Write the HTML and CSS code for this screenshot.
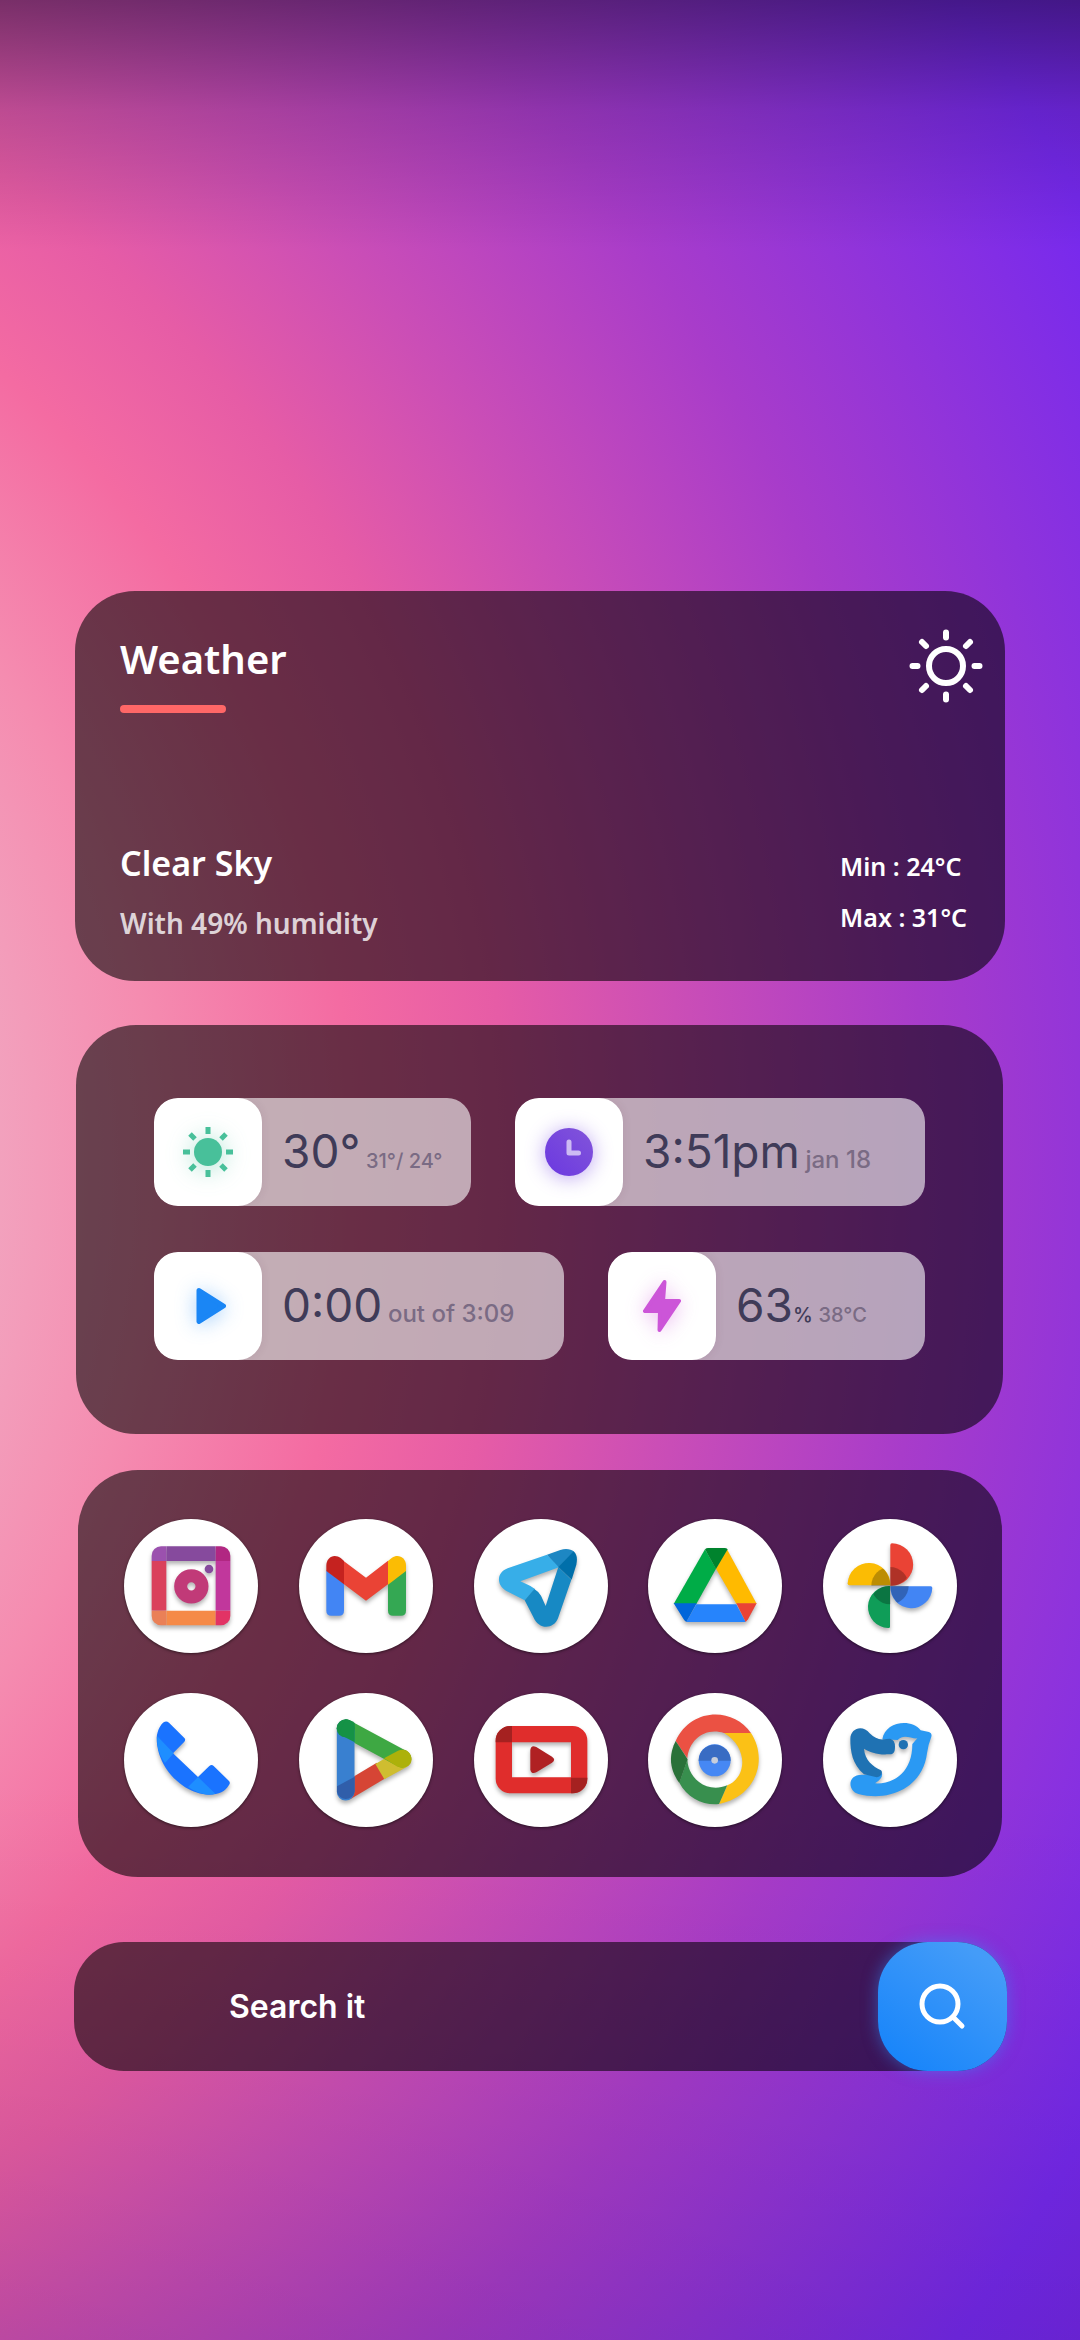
FILE: index.html
```html
<!DOCTYPE html>
<html lang="en">
<head>
<meta charset="utf-8">
<meta name="viewport" content="width=device-width, initial-scale=1">
<title>Home screen</title>
<link rel="stylesheet" href="styles.css">
</head>
<body>
<main class="home">
  <section class="card weather">
    <header class="weather-head">
      <h1 class="weather-title">Weather</h1>
      <svg class="weather-icon" viewBox="-37 -37 74 74" fill="none" stroke="#fff" stroke-width="6" stroke-linecap="round" aria-hidden="true">
        <circle r="17"/>
        <path d="M0-33.500V-28.500M0 33.500V28.500M-33.500 0H-28.500M33.500 0H28.500M-24-24L-20-20M24-24L20-20M-24 24L-20 20M24 24L20 20"/>
      </svg>
    </header>
    <div class="weather-foot">
      <div>
        <p class="condition">Clear Sky</p>
        <p class="humidity">With 49% humidity</p>
      </div>
      <div class="range">
        <p>Min : 24°C</p>
        <p>Max : 31°C</p>
      </div>
    </div>
  </section>

  <section class="card stats">
    <div class="stats-row">
      <div class="chip">
        <div class="chip-icon">
          <svg class="glow-green" viewBox="-54 -54 108 108" aria-hidden="true">
            <circle r="14" fill="#48c09a"/>
            <path d="M0-25V-18M0 25V18M-25 0H-18M25 0H18M-18-18L-13-13M18-18L13-13M-18 18L-13 13M18 18L13 13" stroke="#48c09a" stroke-width="5"/>
          </svg>
        </div>
        <p class="chip-text"><strong>30°</strong> <small>31°/ 24°</small></p>
      </div>
      <div class="chip">
        <div class="chip-icon">
          <svg class="glow-violet" viewBox="-54 -54 108 108" aria-hidden="true">
            <defs><linearGradient id="clock" x1="0" y1="1" x2="1" y2="0"><stop stop-color="#6b38e0"/><stop offset="1" stop-color="#8255da"/></linearGradient></defs>
            <circle r="24" fill="url(#clock)"/>
            <path d="M0-10V1H9.500" fill="none" stroke="#cdbbf3" stroke-width="5" stroke-linecap="round" stroke-linejoin="round"/>
          </svg>
        </div>
        <p class="chip-text"><strong>3:51pm</strong> <small class="large">jan 18</small></p>
      </div>
    </div>
    <div class="stats-row reverse">
      <div class="chip">
        <div class="chip-icon">
          <svg class="glow-blue" viewBox="-54 -54 108 108" aria-hidden="true">
            <path d="M-9-15.500L15.500 0L-9 15.500Z" fill="#1a86f5" stroke="#1a86f5" stroke-width="5" stroke-linejoin="round"/>
          </svg>
        </div>
        <p class="chip-text"><strong>0:00</strong> <small class="large">out of 3:09</small></p>
      </div>
      <div class="chip">
        <div class="chip-icon">
          <svg class="glow-pink" viewBox="-54 -54 108 108" aria-hidden="true">
            <path d="M2.500-24L-17 5H-2L-2.500 24L17-5H1Z" fill="#cc55d8" stroke="#cc55d8" stroke-width="4" stroke-linejoin="round"/>
          </svg>
        </div>
        <p class="chip-text"><strong>63</strong><span class="unit">%</span> <small>38°C</small></p>
      </div>
    </div>
  </section>

  <nav class="card dock" aria-label="Apps">
    <a class="app" href="#instagram" aria-label="Instagram">
      <svg viewBox="43 56 402 402"><g class="lift">
        <path fill="#864a9d" d="M170 138h148v44H170z"/><path fill="#da415c" d="M126 182h44v149h-44z"/>
        <path fill="#c1379c" d="M318 182h44v149h-44z"/><path fill="#f58a48" d="M170 331h148v44H170z"/>
        <path fill="#9b51ae" d="M170 138h-16a28 28 0 0 0-28 28v16h44z"/><path fill="#b12782" d="M318 138h16a28 28 0 0 1 28 28v16h-44z"/>
        <path fill="#ea8057" d="M126 331h44v44h-16a28 28 0 0 1-28-28z"/><path fill="#e23365" d="M318 331h44v16a28 28 0 0 1-28 28h-16z"/>
        <circle cx="245" cy="258" r="32" fill="none" stroke="#c13a78" stroke-width="39"/><circle cx="298" cy="206" r="13" fill="#864a9d"/>
      </g></svg>
    </a>
    <a class="app" href="#gmail" aria-label="Gmail">
      <svg viewBox="565 56 402 402"><g class="lift">
        <path fill="#4285f4" d="M647 210l53 40v81q0 15-15 15h-23q-15 0-15-15z"/>
        <path fill="#34a853" d="M886 210l-54 40v81q0 15 15 15h24q15 0 15-15z"/>
        <path fill="#ea4335" d="M698 181l68 51 66-51v71l-66 49-66-49z"/>
        <path fill="#c5221f" d="M647 212v-16c0-26 24-38 44-22l9 8v70z"/>
        <path fill="#fbbc04" d="M886 212v-16c0-26-24-36-42-24l-12 10v71z"/>
      </g></svg>
    </a>
    <a class="app" href="#telegram" aria-label="Telegram">
      <svg viewBox="69 56 402 402"><g class="lift">
        <path fill="#37aee8" d="M288 163L170 204c-34 13-34 50-5 67l56 29 31-34-15-10-29-13 118-43z"/>
        <path fill="#1789c4" d="M221 300l26 50c15 38 60 39 74 4l40-116-39-38-38 117-14-31q-7-12-20-20z"/>
        <path fill="#1d87c3" d="M288 163l40-14c16-5 32-3 41 5l-46 46z"/>
        <path fill="#006faa" d="M368 153c11 10 11 24 8 40l-14 45-40-38z"/>
      </g></svg>
    </a>
    <a class="app" href="#drive" aria-label="Drive">
      <svg viewBox="592 56 402 402"><g class="lift">
        <path fill="#00ac47" d="M763 147l33 58-59 106h-68z"/><path fill="#ffba00" d="M829 147l89 163h-61l-61-105z"/>
        <path fill="#2684fc" d="M737 312h120l28 53H707z"/><path fill="#00832d" d="M763 147q4-4 9-4h50q5 0 9 4l-35 59z"/>
        <path fill="#0066da" d="M669 309h69l-31 56q-5-3-8-8z"/><path fill="#ea4335" d="M857 309h61l-26 48-7 8z"/>
      </g></svg>
    </a>
    <a class="app" href="#photos" aria-label="Photos">
      <svg viewBox="96 56 402 402">
        <defs><clipPath id="petals"><path d="M298 257V129a63 63 0 0 1 0 128H424a63 67 0 0 1-126 0V383a63 63 0 0 1 0-127H170a63 67 0 0 1 128 0z"/></clipPath></defs>
        <g class="lift">
        <path fill="#ea4335" d="M298 256V134q0-5 5-5a63 63 0 0 1 0 127z"/><path fill="#4285f4" d="M298 258h121q5 0 5 5a63 63 0 0 1-126-5z"/>
        <path fill="#0f9d58" d="M297 257v122q0 5-6 4a63 63 0 0 1 6-126z"/><path fill="#fbbc04" d="M298 255H175q-5 0-5-6a64 64 0 0 1 128 6z"/>
        <circle cx="297" cy="256" r="56" fill="#000" opacity=".25" clip-path="url(#petals)"/>
      </g></svg>
    </a>
    <a class="app" href="#phone" aria-label="Phone">
      <svg viewBox="43 54 402 402"><g class="lift">
        <path fill="#1a73ff" d="M141 188c2-22 12-39 21-46q8-5 16 1l46 46q5 5 0 11l-34 35 75 71 34-33q7-6 13 0l46 45q5 6 0 12c-12 20-29 28-60 29-76-1-157-80-157-171z"/>
        <path fill="#1e8eff" d="M143 184l49 51-26 29c-18-26-26-52-23-80zM265 306l52 50c-27 8-56-3-82-20z"/>
      </g></svg>
    </a>
    <a class="app" href="#play" aria-label="Play Store">
      <svg viewBox="565 54 402 402"><g class="lift" stroke-linecap="round" stroke-width="53" fill="none">
        <path stroke="#d64535" d="M705 350L812 286" stroke-linecap="butt"/>
        <path fill="#cfbd30" d="M794 267l68-40c34-17 57 33 25 50l-66 36z"/>
        <path stroke="#3ea843" d="M705 160L875 251"/>
        <path fill="#adb10a" d="M820 250l42-23c36-14 57 35 24 49q-14 5-28-2z"/>
        <path stroke="#3980d0" d="M705 160V350"/>
        <circle cx="705" cy="160" r="27" fill="#159246"/>
        <path fill="#159246" d="M705 133q12 0 27 11v58l-48-25z"/>
        <path fill="#305eaa" d="M679 334l53-29v45a27 27 0 0 1-53 0z"/>
      </g></svg>
    </a>
    <a class="app" href="#youtube" aria-label="YouTube">
      <svg viewBox="69 54 402 402"><g class="lift">
        <path fill="#e02d2c" fill-rule="evenodd" d="M178 153h187a44 44 0 0 1 44 44v114a44 44 0 0 1-44 44H178a44 44 0 0 1-44-44V197a44 44 0 0 1 44-44zM183 202v105h177V202z"/>
        <path fill="#a52120" d="M183 153v49h-49v-5a44 44 0 0 1 44-44zM360 308h49v3a44 44 0 0 1-44 44h-5z"/>
        <path fill="#b02123" d="M238 225q2-17 18-9l47 29q13 9 0 18l-47 29q-15 7-18-8z"/>
      </g></svg>
    </a>
    <a class="app" href="#chrome" aria-label="Chrome">
      <svg viewBox="592 54 402 402"><g class="lift">
        <path fill="#fbc116" d="M820 174h81c51 78 18 190-96 213l25-56c58-23 65-112-10-157z"/>
        <path fill="#eb5143" d="M675 198c45-100 172-103 226-24h-81c-54-18-105 18-110 76z"/>
        <path fill="#388f4e" d="M686 323l24-69c2 55 58 103 120 77l-25 56c-46 5-95-18-119-64z"/>
        <path fill="#2a7139" d="M675 198l36 55-25 71c-28-37-34-82-11-126z"/>
        <circle cx="792" cy="256" r="48" fill="#4688f4"/><path fill="#396cc3" d="M744 257a48 48 0 0 1 96 0z"/><circle cx="792" cy="256" r="10" fill="#c7cedb"/>
      </g></svg>
    </a>
    <a class="app" href="#twitter" aria-label="Twitter">
      <svg viewBox="96 54 402 402"><g class="lift">
        <path fill="#2a99f3" fill-rule="evenodd" d="M274 193c8-53 86-64 115-27l25 5q10 3 7 14-9 22-13 50c-12 100-110 147-206 122-33-10-33-58 10-58l42 1 19-5q3 14-21 30c58 3 112-34 112-118l15-17c-18 2-41-15-59 5z"/>
        <path fill="#1f72b3" d="M178 192c0-32 37-44 58-17q20 20 41 18l20-2q15 3 15 24c0 20-6 23-20 23-32 2-55-6-73-17 3 36 26 52 51 65 8 8-2 21-13 21l-38-9c-35-30-41-68-41-106z"/>
        <circle cx="337" cy="209" r="14" fill="#1f72b3"/>
      </g></svg>
    </a>
  </nav>

  <form class="search" role="search">
    <input class="search-input" type="text" placeholder="Search it" aria-label="Search it">
    <button class="search-button" type="button" aria-label="Search">
      <svg viewBox="0 0 48 48" fill="none" stroke="#fff" stroke-width="5" stroke-linecap="round" aria-hidden="true"><circle cx="21" cy="21" r="18"/><path d="M35 35L43 43"/></svg>
    </button>
  </form>
</main>
</body>
</html>
```
FILE: styles.css
```css
* {
  box-sizing: border-box;
}

body {
  margin: 0;
  min-height: 100vh;
  padding: 591px 75px 120px;
  font-family: Inter, sans-serif;
  color: #fff;
  background:
    linear-gradient(rgba(0, 0, 0, 0.42), rgba(0, 0, 0, 0.15) 110px, transparent 250px),
    linear-gradient(transparent 76%, rgba(0, 0, 0, 0.1)),
    radial-gradient(circle 2200px at -67% 50%,
      #f2a4bf 0, #f2a4bf 32%, #f58cb0 40%, #f46ba2 49%, #e65ca6 56%,
      #cb4eb6 64%, #a83cca 75%, #8e33dc 84%, #7629ee 93%, #7226e6 100%);
}

h1,
p {
  margin: 0;
}

.home {
  display: flex;
  flex-direction: column;
}

.card {
  background: rgba(0, 0, 0, 0.57);
  border-radius: 60px;
}

/* Weather */

.weather {
  display: flex;
  flex-direction: column;
  justify-content: space-between;
  min-height: 390px;
  padding: 38px 22px 38px 45px;
  font-family: "Noto Sans", sans-serif;
  font-weight: 600;
}

.weather-head,
.weather-foot {
  display: flex;
  justify-content: space-between;
}

.weather-title {
  font-size: 40px;
  font-weight: 600;
  line-height: 60px;
}

.weather-title::after {
  content: "";
  display: block;
  width: 106px;
  height: 8px;
  margin-top: 16px;
  border-radius: 4px;
  background: #ff6767;
}

.weather-icon {
  width: 74px;
  height: 74px;
}

.weather-foot {
  align-items: flex-end;
  padding-right: 16px;
}

.condition {
  margin-bottom: 16px;
  font-size: 34px;
  line-height: 48px;
}

.humidity {
  font-size: 28px;
  line-height: 40px;
  color: rgba(255, 255, 255, 0.8);
}

.range {
  font-size: 25px;
  line-height: 51px;
}

/* Status chips */

.stats {
  display: grid;
  gap: 46px;
  margin: 44px 2px 0 1px;
  padding: 73px 78px 74px;
}

.stats-row {
  display: grid;
  grid-template-columns: 317fr 410fr;
  gap: 44px;
}

.stats-row.reverse {
  grid-template-columns: 410fr 317fr;
}

.chip {
  display: flex;
  align-items: center;
  gap: 20px;
  overflow: hidden;
  border-radius: 24px;
  background: rgba(255, 255, 255, 0.6);
}

.chip-icon {
  flex: none;
  width: 108px;
  height: 108px;
  border-radius: 24px;
  background: #fff;
  box-shadow: 0 0 10px rgba(80, 40, 60, 0.1);
}

.chip-icon svg {
  display: block;
}

.glow-green { filter: drop-shadow(0 2px 10px rgba(72, 192, 154, 0.4)); }
.glow-violet { filter: drop-shadow(0 2px 10px rgba(107, 56, 224, 0.45)); }
.glow-blue { filter: drop-shadow(0 2px 10px rgba(26, 134, 245, 0.4)); }
.glow-pink { filter: drop-shadow(0 2px 10px rgba(204, 85, 216, 0.4)); }

.chip-text {
  padding-top: 8px;
  white-space: nowrap;
  font-size: 20px;
  line-height: 56px;
  color: #3f3b58;
}

.chip-text strong {
  font-size: 46px;
  font-weight: 400;
}

.chip-text .unit {
  font-weight: 500;
}

.chip-text small {
  font-size: 20px;
  font-weight: 500;
  color: #7a6b84;
}

.chip-text .large {
  font-size: 24px;
}

/* App dock */

.dock {
  display: grid;
  grid-template-columns: repeat(5, 134px);
  justify-content: space-between;
  row-gap: 40px;
  margin: 36px 3px 0;
  padding: 49px 45px 50px 46px;
}

.app {
  height: 134px;
  border-radius: 50%;
  background: #fff;
  box-shadow: 0 1px 3px rgba(0, 0, 0, 0.5);
}

.app svg {
  display: block;
}

.lift {
  filter: drop-shadow(0 9px 6px rgba(0, 0, 0, 0.3));
}

/* Search */

.search {
  display: flex;
  height: 129px;
  margin: 65px -2px 0 -1px;
  border-radius: 50px;
  background: rgba(0, 0, 0, 0.57);
}

.search-input {
  flex: 1;
  min-width: 0;
  padding: 0 40px 0 155px;
  border: 0;
  outline: 0;
  background: none;
  font: 600 32px Inter, sans-serif;
  color: #fff;
}

.search-input::placeholder {
  color: #fff;
  opacity: 1;
}

.search-button {
  display: grid;
  place-items: center;
  width: 129px;
  padding: 0;
  border: 0;
  border-radius: 50px;
  background: linear-gradient(35deg, #1885fa 10%, #449cf8 85%);
  box-shadow: 0 0 16px rgba(48, 144, 250, 0.5);
}

.search-button svg {
  width: 48px;
  height: 48px;
}
```
